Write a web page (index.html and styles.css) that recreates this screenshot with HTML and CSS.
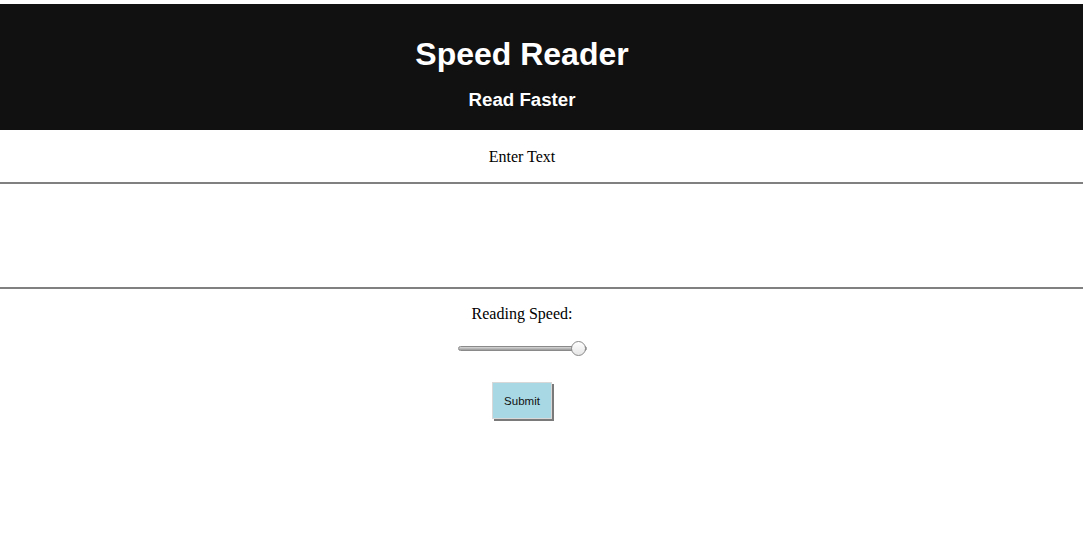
FILE: index.html
```html
<!DOCTYPE html>
<html>
<head>
<meta charset="utf-8">
<link rel="stylesheet" href="styles.css">
</head>
<body>
<header class="site-header">
  <h1 class="title">Speed Reader</h1>
  <h2 class="subtitle">Read Faster</h2>
</header>
<main class="reader">
  <label class="label label-text" for="text">Enter Text</label>
  <textarea id="text" class="text-input"></textarea>
  <label class="label label-speed" for="speed">Reading Speed:</label>
  <div class="slider-row">
    <input id="speed" class="speed" type="range" min="0" max="100" value="100">
  </div>
  <div class="button-row">
    <button class="submit" type="button">Submit</button>
  </div>
</main>
</body>
</html>
```
FILE: styles.css
```css
html, body {
  margin: 0;
  padding: 0;
  background: #fff;
}
body {
  padding-top: 4px;
  font-family: "Liberation Serif", "Times New Roman", serif;
  font-size: 16px;
  color: #000;
}
.site-header {
  background: #111111;
  color: #fff;
  height: 126px;
  box-sizing: border-box;
  padding: 32px 39px 0 0;
  text-align: center;
  font-family: "Liberation Sans", Arial, sans-serif;
}
.title {
  margin: 0;
  font-size: 32px;
  line-height: 37px;
  font-weight: bold;
}
.subtitle {
  margin: 16px 0 0;
  font-size: 18.7px;
  line-height: 21px;
  font-weight: bold;
}
.reader {
  display: flex;
  flex-direction: column;
  align-items: stretch;
}
.label {
  display: block;
  text-align: center;
  padding-right: 39px;
  line-height: 18px;
}
.label-text {
  margin-top: 18px;
  height: 34px;
}
.text-input {
  display: block;
  width: 100%;
  height: 107px;
  box-sizing: border-box;
  margin: 0;
  border: none;
  border-top: 2px solid #808080;
  border-bottom: 2px solid #808080;
  resize: none;
  outline: none;
  padding: 2px;
}
.label-speed {
  margin-top: 16px;
}
.slider-row {
  display: flex;
  justify-content: center;
  padding-right: 39px;
  margin-top: 17px;
}
.speed {
  -webkit-appearance: none;
  appearance: none;
  width: 129px;
  height: 16px;
  margin: 0;
  background: transparent;
}
.speed::-webkit-slider-runnable-track {
  height: 5px;
  border-radius: 3px;
  background: linear-gradient(#d8d8d8, #9a9a9a);
  border: 1px solid #8a8a8a;
  box-sizing: border-box;
}
.speed::-webkit-slider-thumb {
  -webkit-appearance: none;
  width: 15px;
  height: 15px;
  border-radius: 50%;
  background: linear-gradient(#ffffff, #e6e6e6);
  border: 1px solid #8a8a8a;
  box-sizing: border-box;
  margin-top: -6px;
}
.button-row {
  display: flex;
  justify-content: center;
  padding-right: 39px;
  margin-top: 26px;
  padding-bottom: 4px;
}
.submit {
  width: 60px;
  height: 37px;
  margin: 0;
  background: #a8d8e4;
  border: 1px solid #d8d8d8;
  box-shadow: 2px 2px 0 #7a7a7a;
  font-family: "Liberation Sans", Arial, sans-serif;
  font-size: 11.5px;
  color: #111;
  padding: 0;
}
```
